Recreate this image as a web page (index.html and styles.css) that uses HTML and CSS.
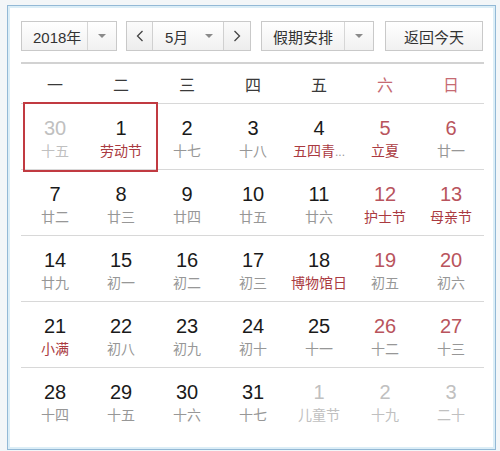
FILE: index.html
```html
<!DOCTYPE html>
<html lang="zh-CN">
<head>
<meta charset="utf-8">
<title>日历</title>
<link rel="stylesheet" href="styles.css">
</head>
<body>
<div class="frame">
  <div class="toolbar">
    <div class="select year">
      <span class="sel-text">2018年</span>
      <span class="sel-arrow"><i class="tri"></i></span>
    </div>
    <div class="month-group">
      <span class="nav prev"><svg width="8" height="12" viewBox="0 0 8 12"><polyline points="6.5,1 1.5,6 6.5,11" fill="none" stroke="#444" stroke-width="1.3"/></svg></span>
      <span class="month"><span class="sel-text">5月</span><i class="tri"></i></span>
      <span class="nav next"><svg width="8" height="12" viewBox="0 0 8 12"><polyline points="1.5,1 6.5,6 1.5,11" fill="none" stroke="#444" stroke-width="1.3"/></svg></span>
    </div>
    <div class="select holiday">
      <span class="sel-text">假期安排</span>
      <span class="sel-arrow"><i class="tri"></i></span>
    </div>
    <div class="today">返回今天</div>
  </div>

  <div class="week-head">
    <span>一</span><span>二</span><span>三</span><span>四</span><span>五</span><span class="wk">六</span><span class="wk">日</span>
  </div>

  <div class="grid">
    <div class="today-box"></div>
    <div class="row">
      <div class="cell other"><b>30</b><em>十五</em></div>
      <div class="cell"><b>1</b><em class="fest">劳动节</em></div>
      <div class="cell"><b>2</b><em>十七</em></div>
      <div class="cell"><b>3</b><em>十八</em></div>
      <div class="cell"><b>4</b><em class="fest">五四青<span class="dots">...</span></em></div>
      <div class="cell we"><b>5</b><em class="fest">立夏</em></div>
      <div class="cell we"><b>6</b><em>廿一</em></div>
    </div>
    <div class="row">
      <div class="cell"><b>7</b><em>廿二</em></div>
      <div class="cell"><b>8</b><em>廿三</em></div>
      <div class="cell"><b>9</b><em>廿四</em></div>
      <div class="cell"><b>10</b><em>廿五</em></div>
      <div class="cell"><b>11</b><em>廿六</em></div>
      <div class="cell we"><b>12</b><em class="fest">护士节</em></div>
      <div class="cell we"><b>13</b><em class="fest">母亲节</em></div>
    </div>
    <div class="row">
      <div class="cell"><b>14</b><em>廿九</em></div>
      <div class="cell"><b>15</b><em>初一</em></div>
      <div class="cell"><b>16</b><em>初二</em></div>
      <div class="cell"><b>17</b><em>初三</em></div>
      <div class="cell"><b>18</b><em class="fest">博物馆日</em></div>
      <div class="cell we"><b>19</b><em>初五</em></div>
      <div class="cell we"><b>20</b><em>初六</em></div>
    </div>
    <div class="row">
      <div class="cell"><b>21</b><em class="fest">小满</em></div>
      <div class="cell"><b>22</b><em>初八</em></div>
      <div class="cell"><b>23</b><em>初九</em></div>
      <div class="cell"><b>24</b><em>初十</em></div>
      <div class="cell"><b>25</b><em>十一</em></div>
      <div class="cell we"><b>26</b><em>十二</em></div>
      <div class="cell we"><b>27</b><em>十三</em></div>
    </div>
    <div class="row last">
      <div class="cell"><b>28</b><em>十四</em></div>
      <div class="cell"><b>29</b><em>十五</em></div>
      <div class="cell"><b>30</b><em>十六</em></div>
      <div class="cell"><b>31</b><em>十七</em></div>
      <div class="cell other"><b>1</b><em>儿童节</em></div>
      <div class="cell other"><b>2</b><em>十九</em></div>
      <div class="cell other"><b>3</b><em>二十</em></div>
    </div>
  </div>
</div>
</body>
</html>
```

FILE: styles.css
```css
* { box-sizing: border-box; }

html, body {
  margin: 0;
  padding: 0;
  background: #f3f6f8;
}

body {
  width: 500px;
  height: 451px;
  overflow: hidden;
  font-family: "Liberation Sans", "Noto Sans CJK SC", Arial, sans-serif;
  color: #222;
}

.frame {
  margin: 5px 0 0 7px;
  width: 489px;
  height: 445px;
  background: #fff;
  border: 1px solid #93b9d6;
  box-shadow: inset 0 0 0 2px #dceef7;
  padding: 15px 11px 0 13px;
}

/* toolbar */
.toolbar {
  display: flex;
  height: 30px;
  font-size: 15px;
  color: #333;
}

.select,
.month-group,
.today {
  height: 30px;
  border: 1px solid #c9c9c9;
  background: linear-gradient(#ffffff, #f1f1f1);
  display: flex;
  align-items: center;
}

.year { width: 96px; }
.month-group { width: 125px; margin-left: 9px; }
.holiday { width: 113px; margin-left: 10px; }
.today { width: 98px; margin-left: 11px; justify-content: center; }

.sel-text {
  flex: 1;
  padding-left: 11px;
  white-space: nowrap;
}

.sel-arrow {
  width: 29px;
  height: 100%;
  border-left: 1px solid #d6d6d6;
  display: flex;
  align-items: center;
  justify-content: center;
}

.tri {
  display: block;
  width: 0;
  height: 0;
  border-left: 4px solid transparent;
  border-right: 4px solid transparent;
  border-top: 4px solid #8a8a8a;
}

.nav {
  width: 26px;
  height: 100%;
  display: flex;
  align-items: center;
  justify-content: center;
  background: linear-gradient(#fbfbfb, #ededed);
}
.nav.prev { border-right: 1px solid #d0d0d0; }
.nav.next { border-left: 1px solid #d0d0d0; width: 27px; }
.nav svg { display: block; }

.month {
  flex: 1;
  height: 100%;
  display: flex;
  align-items: center;
  padding-right: 10px;
}
.month .sel-text { padding-left: 12px; }

/* weekday header */
.week-head {
  margin-top: 11px;
  border-top: 2px solid #d2d2d2;
  height: 42px;
  border-bottom: 1px solid #d8d8d8;
  display: grid;
  grid-template-columns: repeat(7, 1fr);
  align-items: center;
  font-size: 16px;
  color: #3a3a3a;
  text-align: center;
  padding-left: 1px;
}
.week-head .wk { color: #c66a73; }

/* date grid */
.grid {
  position: relative;
}

.row {
  height: 66px;
  border-bottom: 1px solid #d8d8d8;
  display: grid;
  grid-template-columns: repeat(7, 1fr);
  padding-left: 1px;
}
.row.last { border-bottom: none; }

.cell {
  display: flex;
  flex-direction: column;
  align-items: center;
  padding-top: 13px;
}

.cell b {
  font-weight: normal;
  font-size: 20px;
  line-height: 22px;
  color: #1a1a1a;
}

.cell em {
  font-style: normal;
  font-size: 14px;
  line-height: 20px;
  margin-top: 2px;
  color: #979797;
  white-space: nowrap;
}

.cell.we b { color: #b9545d; }
.cell em.fest { color: #aa3a41; }
.cell .dots { color: #999; font-size: 12px; }

.cell.other b,
.cell.other em { color: #c0c0c0; }

.today-box {
  position: absolute;
  left: 2px;
  top: -2px;
  width: 135px;
  height: 70px;
  border: 2px solid #c13a41;
  pointer-events: none;
}
```
